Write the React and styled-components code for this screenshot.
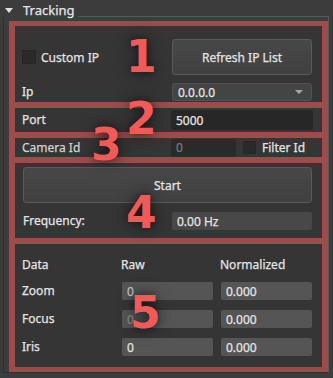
import React from "react";
import styled, { createGlobalStyle } from "styled-components";

const Global = createGlobalStyle`
  html, body { margin: 0; padding: 0; background: #3c3c3c; }
  * { box-sizing: border-box; }
`;

const Root = styled.div`
  position: relative;
  width: 333px;
  height: 378px;
  overflow: hidden;
  background: #3c3c3c;
  font-family: "Noto Sans", "DejaVu Sans", sans-serif;
  font-size: 12px;
  color: #e4e4e4;
  -webkit-text-stroke: 0.25px currentColor;
`;

const Header = styled.div`
  display: flex;
  align-items: center;
  height: 17px;
  padding-left: 5px;
`;

const Caret = styled.span`
  width: 0;
  height: 0;
  border-left: 4px solid transparent;
  border-right: 4px solid transparent;
  border-top: 5px solid #e0e0e0;
  margin-right: 10px;
  margin-top: 3px;
`;

const Title = styled.span`
  font-size: 13px;
  line-height: 16px;
  margin-top: 2px;
  color: #e6e6e6;
`;

const TitleLine = styled.span`
  flex: 1;
  align-self: flex-end;
  height: 1px;
  margin-left: 3px;
  margin-right: 4px;
  background: #595959;
`;

const Group = styled.div`
  margin-left: 3px;
  width: 326px;
  height: 356px;
  border-left: 1px solid #2f2f2f;
  border-right: 1px solid #595959;
  border-bottom: 1px solid #2f2f2f;
  padding: 4px 0 0 5px;
`;

const Frame = styled.div`
  display: flex;
  flex-direction: column;
  gap: 6px;
  width: 319px;
  padding: 5px 6px;
  background: #9d4b4b;
`;

const Section = styled.div`
  background: #353535;
  height: ${(p) => p.$h}px;
  padding: ${(p) => p.$pad || "0 10px 0 7px"};
  display: flex;
  flex-direction: column;
  justify-content: ${(p) => (p.$center ? "center" : "flex-start")};
`;

const Row = styled.div`
  display: grid;
  grid-template-columns: ${(p) => p.$cols || "150px 140px"};
  column-gap: ${(p) => p.$gap || 0}px;
  align-items: center;
  margin-top: ${(p) => p.$mt || 0}px;
`;

const Label = styled.span`
  line-height: 16px;
  color: ${(p) => (p.$dim ? "#d2d2d2" : "#e4e4e4")};
  white-space: nowrap;
`;

const CheckLabel = styled.label`
  display: flex;
  align-items: center;
  gap: ${(p) => p.$gap || 5}px;
  margin-left: ${(p) => p.$ml || 0}px;
  white-space: nowrap;
`;

const Box = styled.span`
  width: ${(p) => p.$s || 14}px;
  height: ${(p) => p.$s || 14}px;
  background: #2a2a2a;
  border: 1px solid #262626;
  flex: none;
`;

const Button = styled.div`
  height: 36px;
  display: flex;
  align-items: center;
  justify-content: center;
  background: linear-gradient(#474747, #414141);
  border: 1px solid #5a5a5a;
  border-radius: 3px;
  color: #e4e4e4;
`;

const Select = styled.div`
  height: 18px;
  display: flex;
  align-items: center;
  justify-content: space-between;
  padding: 0 8px 0 5px;
  background: #444444;
  border: 1px solid #525252;
  border-radius: 3px;
`;

const Arrow = styled.span`
  width: 0;
  height: 0;
  border-left: 4px solid transparent;
  border-right: 4px solid transparent;
  border-top: 4px solid #a8a8a8;
`;

const Field = styled.div`
  height: ${(p) => p.$h || 18}px;
  width: ${(p) => (p.$w ? `${p.$w}px` : "auto")};
  display: flex;
  align-items: center;
  padding-left: 5px;
  background: ${(p) => p.$bg || "#2a2a2a"};
  border-radius: 2px;
  color: ${(p) => p.$fg || "#e4e4e4"};
  overflow: hidden;
`;

const CamRow = styled.div`
  display: flex;
  align-items: center;
`;

const Marker = styled.div`
  position: absolute;
  left: ${(p) => p.$x}px;
  top: ${(p) => p.$y}px;
  font-family: "DejaVu Sans", sans-serif;
  font-weight: bold;
  font-size: 44px;
  line-height: 1;
  color: #f25a5a;
  -webkit-text-stroke: 0;
  text-shadow: 0 0 10px rgba(0, 0, 0, 0.55), 0 0 18px rgba(0, 0, 0, 0.35);
  pointer-events: none;
`;

export default function App() {
  return (
    <Root>
      <Global />
      <Header>
        <Caret />
        <Title>Tracking</Title>
        <TitleLine />
      </Header>
      <Group>
        <Frame>
          <Section $h={76} $pad="13px 10px 0 7px">
            <Row>
              <CheckLabel>
                <Box />
                <span>Custom IP</span>
              </CheckLabel>
              <Button>Refresh IP List</Button>
            </Row>
            <Row $mt={8}>
              <Label>Ip</Label>
              <Select>
                <span>0.0.0.0</span>
                <Arrow />
              </Select>
            </Row>
          </Section>
          <Section $h={24} $center $pad="0 9px 0 7px">
            <Row $cols="149px 142px">
              <Label>Port</Label>
              <Field $h={20} $bg="#272727">5000</Field>
            </Row>
          </Section>
          <Section $h={19} $center $pad="0 9px 0 7px">
            <Row $cols="149px 142px">
              <Label $dim>Camera Id</Label>
              <CamRow>
                <Field $h={18} $w={65} $bg="#2a2a2a" $fg="#7a7a7a">0</Field>
                <CheckLabel $ml={7} $gap={6}>
                  <Box $s={13} />
                  <span>Filter Id</span>
                </CheckLabel>
              </CamRow>
            </Row>
          </Section>
          <Section $h={75} $pad="4px 10px 0 8px">
            <Button>Start</Button>
            <Row $mt={9} $cols="149px 140px">
              <Label>Frequency:</Label>
              <Field $bg="#484848">0.00 Hz</Field>
            </Row>
          </Section>
          <Section $h={123} $pad="13px 10px 0 7px">
            <Row $cols="91px 91px 91px" $gap={8}>
              <Label>Data</Label>
              <Label>Raw</Label>
              <Label>Normalized</Label>
            </Row>
            <Row $cols="92px 91px 91px" $gap={8} $mt={9}>
              <Label>Zoom</Label>
              <Field $bg="#555555" $fg="#c4c4c4">0</Field>
              <Field $bg="#555555">0.000</Field>
            </Row>
            <Row $cols="92px 91px 91px" $gap={8} $mt={10}>
              <Label>Focus</Label>
              <Field $bg="#555555" $fg="#8a8a8a">0</Field>
              <Field $bg="#555555">0.000</Field>
            </Row>
            <Row $cols="92px 91px 91px" $gap={8} $mt={10}>
              <Label>Iris</Label>
              <Field $bg="#555555">0</Field>
              <Field $bg="#555555">0.000</Field>
            </Row>
          </Section>
        </Frame>
      </Group>
      <Marker $x={126} $y={35}>1</Marker>
      <Marker $x={126} $y={97}>2</Marker>
      <Marker $x={91} $y={123}>3</Marker>
      <Marker $x={126} $y={191}>4</Marker>
      <Marker $x={130} $y={291}>5</Marker>
    </Root>
  );
}
